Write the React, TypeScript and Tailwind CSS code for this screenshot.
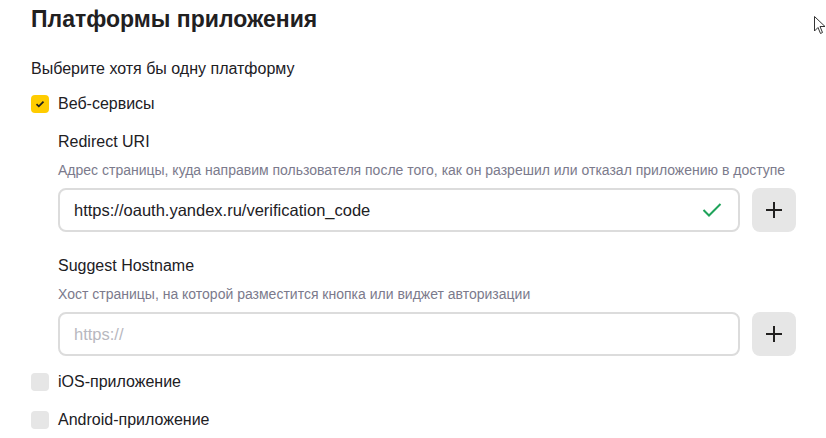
import React from "react";

function Check({ checked, label }: { checked?: boolean; label: string }) {
  return (
    <div className="flex items-center gap-[9px] h-[18px]">
      <div
        className={
          "w-[18px] h-[18px] rounded-[4px] flex items-center justify-center " +
          (checked ? "bg-[#ffcc00]" : "bg-[#e6e6e6]")
        }
      >
        {checked && (
          <svg width="10" height="8" viewBox="0 0 10 8" fill="none">
            <path d="M1.5 4.2 L3.8 6.3 L8.5 1.6" stroke="#21201f" strokeWidth="1.8" />
          </svg>
        )}
      </div>
      <span className="text-[16px] text-[#21201f] leading-[18px]">{label}</span>
    </div>
  );
}

function PlusButton() {
  return (
    <button className="w-[44px] h-[44px] rounded-[8px] bg-[#e6e6e6] flex items-center justify-center shrink-0">
      <svg width="18" height="18" viewBox="0 0 18 18">
        <path d="M9 1 V17 M1 9 H17" stroke="#21201f" strokeWidth="2" />
      </svg>
    </button>
  );
}

export default function App() {
  return (
    <div
      className="relative w-[826px] h-[438px] bg-white overflow-hidden text-[#21201f]"
      style={{ fontFamily: '"Liberation Sans", Arial, sans-serif' }}
    >
      <div className="pl-[31px] pr-[30px]">
        <h1 className="text-[23px] font-bold leading-[28px] pt-[5px]">Платформы приложения</h1>
        <div className="mt-[26px] text-[16px] leading-[20px]">Выберите хотя бы одну платформу</div>
        <div className="mt-[16px]">
          <Check checked label="Веб-сервисы" />
        </div>
        <div className="pl-[27px]">
          <div className="mt-[19px] text-[16px] leading-[20px]">Redirect URI</div>
          <div className="mt-[9px] text-[14px] leading-[18px] text-[#7b7a8c]">
            Адрес страницы, куда направим пользователя после того, как он разрешил или отказал приложению в доступе
          </div>
          <div className="mt-[9px] flex gap-[12px]">
            <div className="flex-1 h-[44px] border-2 border-[#dcdcdc] rounded-[8px] flex items-center px-[14px]">
              <span className="flex-1 text-[16.5px]">https://oauth.yandex.ru/verification_code</span>
              <svg width="20" height="16" viewBox="0 0 20 16" className="mr-[2px]">
                <path d="M1.5 8 L7 13.5 L18.5 2" stroke="#1fa35a" strokeWidth="2" fill="none" />
              </svg>
            </div>
            <PlusButton />
          </div>
          <div className="mt-[24px] text-[16px] leading-[20px]">Suggest Hostname</div>
          <div className="mt-[9px] text-[14px] leading-[18px] text-[#7b7a8c]">
            Хост страницы, на которой разместится кнопка или виджет авторизации
          </div>
          <div className="mt-[9px] flex gap-[12px]">
            <div className="flex-1 h-[44px] border-2 border-[#dcdcdc] rounded-[8px] flex items-center px-[14px]">
              <span className="text-[16.5px] text-[#b8b8c0]">https://</span>
            </div>
            <PlusButton />
          </div>
        </div>
        <div className="mt-[17px]">
          <Check label="iOS-приложение" />
        </div>
        <div className="mt-[20px]">
          <Check label="Android-приложение" />
        </div>
      </div>
      <svg className="absolute left-[814px] top-[16px]" width="12" height="20" viewBox="0 0 12 20">
        <path d="M0.5 0.5 L0.5 15 L4 11.5 L6.5 17.5 L8.5 16.5 L6 10.5 L11 10.5 Z" fill="white" stroke="#333" strokeWidth="1" />
      </svg>
    </div>
  );
}
